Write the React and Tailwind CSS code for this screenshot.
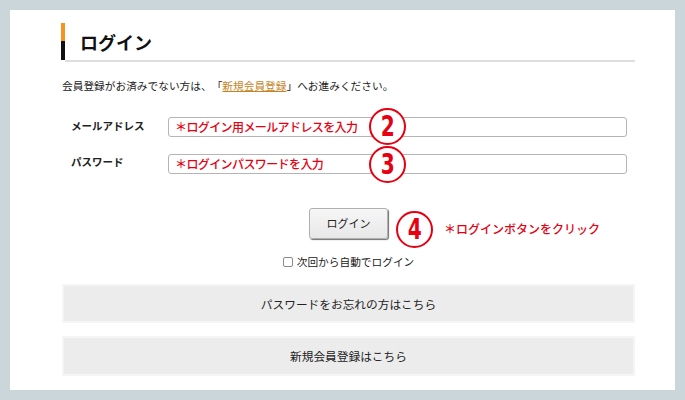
import React from "react";

const jp = { fontFamily: '"Noto Sans CJK JP", "Noto Sans", sans-serif' };

function Circle({ n, className }) {
  return (
    <div
      className={
        "absolute w-[37px] h-[37px] rounded-full border-2 border-[#e60012] bg-white flex items-center justify-center text-[#e60012] font-bold text-[28px] leading-none " +
        className
      }
      style={{ fontFamily: '"Liberation Sans Narrow", "DejaVu Sans Condensed", sans-serif' }}
    >
      <span className="mt-[1px] inline-block scale-x-[0.8]">{n}</span>
    </div>
  );
}

export default function App() {
  return (
    <div className="w-[685px] h-[400px] bg-[#cbd6da] p-[10px] [text-spacing-trim:space-all]" style={jp}>
      <div className="w-[665px] h-[380px] bg-white pt-[13px] pl-[52px] pr-[40px]">
        {/* heading */}
        <div className="flex h-[39px] ml-[-1px]">
          <div className="w-[4px] h-[37px] flex flex-col">
            <div className="h-[18px] bg-[#f7941d]" />
            <div className="h-[19px] bg-[#111]" />
          </div>
          <div className="flex-1 border-b-2 border-[#dedede] flex items-center pl-[15px]">
            <span className="text-[18px] font-bold text-[#111] leading-none">ログイン</span>
          </div>
        </div>

        <p className="mt-[17px] text-[10.7px] leading-[14px] text-[#222]">
          会員登録がお済みでない方は、「
          <span className="text-[#c7841f] underline">新規会員登録</span>
          」へお進みください。
        </p>

        {/* form rows */}
        <div className="mt-[24px] flex items-center">
          <div className="w-[106px] pl-[9px] text-[10.5px] font-bold text-[#222] mt-[-2px]">メールアドレス</div>
          <div className="relative flex-1 mr-[8px] h-[20px] border border-[#b5b5b5] rounded-[3px] flex items-center pl-[6px]">
            <span className="text-[12px] tracking-[-0.6px] text-[#e60012] font-medium leading-none whitespace-nowrap">＊ログイン用メールアドレスを入力</span>
            <Circle n="2" className="left-[200px] top-[-10px]" />
          </div>
        </div>
        <div className="mt-[17px] flex items-center">
          <div className="w-[106px] pl-[9px] text-[10.5px] font-bold text-[#222] mt-[-4px]">パスワード</div>
          <div className="relative flex-1 mr-[8px] h-[20px] border border-[#b5b5b5] rounded-[3px] flex items-center pl-[6px]">
            <span className="text-[12px] tracking-[-0.6px] text-[#e60012] font-medium leading-none whitespace-nowrap">＊ログインパスワードを入力</span>
            <Circle n="3" className="left-[200px] top-[-9px]" />
          </div>
        </div>

        {/* login button */}
        <div className="mt-[34px] flex justify-center">
          <div className="relative">
            <button className="w-[79px] h-[31px] rounded-[3px] border border-[#b0b0b0] bg-gradient-to-b from-[#f6f6f6] to-[#e8e8e8] shadow-[1px_1px_1px_#6f6f6f] text-[11px] text-[#222]">
              ログイン
            </button>
            <div className="absolute left-[calc(100%+8px)] top-[3px] flex items-center">
              <div className="relative w-[36px] h-[36px]">
                <Circle n="4" className="left-0 top-0 w-[36px] h-[36px]" />
              </div>
              <span className="ml-[12px] whitespace-nowrap text-[12px] font-medium text-[#e60012]">＊ログインボタンをクリック</span>
            </div>
          </div>
        </div>

        {/* remember */}
        <div className="mt-[16px] flex justify-center items-center h-[14px]">
          <div className="w-[10px] h-[10px] border border-[#8a8a8a] rounded-[2px] bg-white mr-[4px]" />
          <span className="text-[10.7px] text-[#222] leading-none">次回から自動でログイン</span>
        </div>

        {/* boxes */}
        <div className="mt-[15px] h-[39px] border-2 border-[#f5f5f5] bg-[#ececec] flex items-center justify-center text-[11.7px] text-[#222]">
          パスワードをお忘れの方はこちら
        </div>
        <div className="mt-[13px] h-[40px] border-2 border-[#f5f5f5] bg-[#ececec] flex items-center justify-center text-[11.7px] text-[#222]">
          新規会員登録はこちら
        </div>
      </div>
    </div>
  );
}
